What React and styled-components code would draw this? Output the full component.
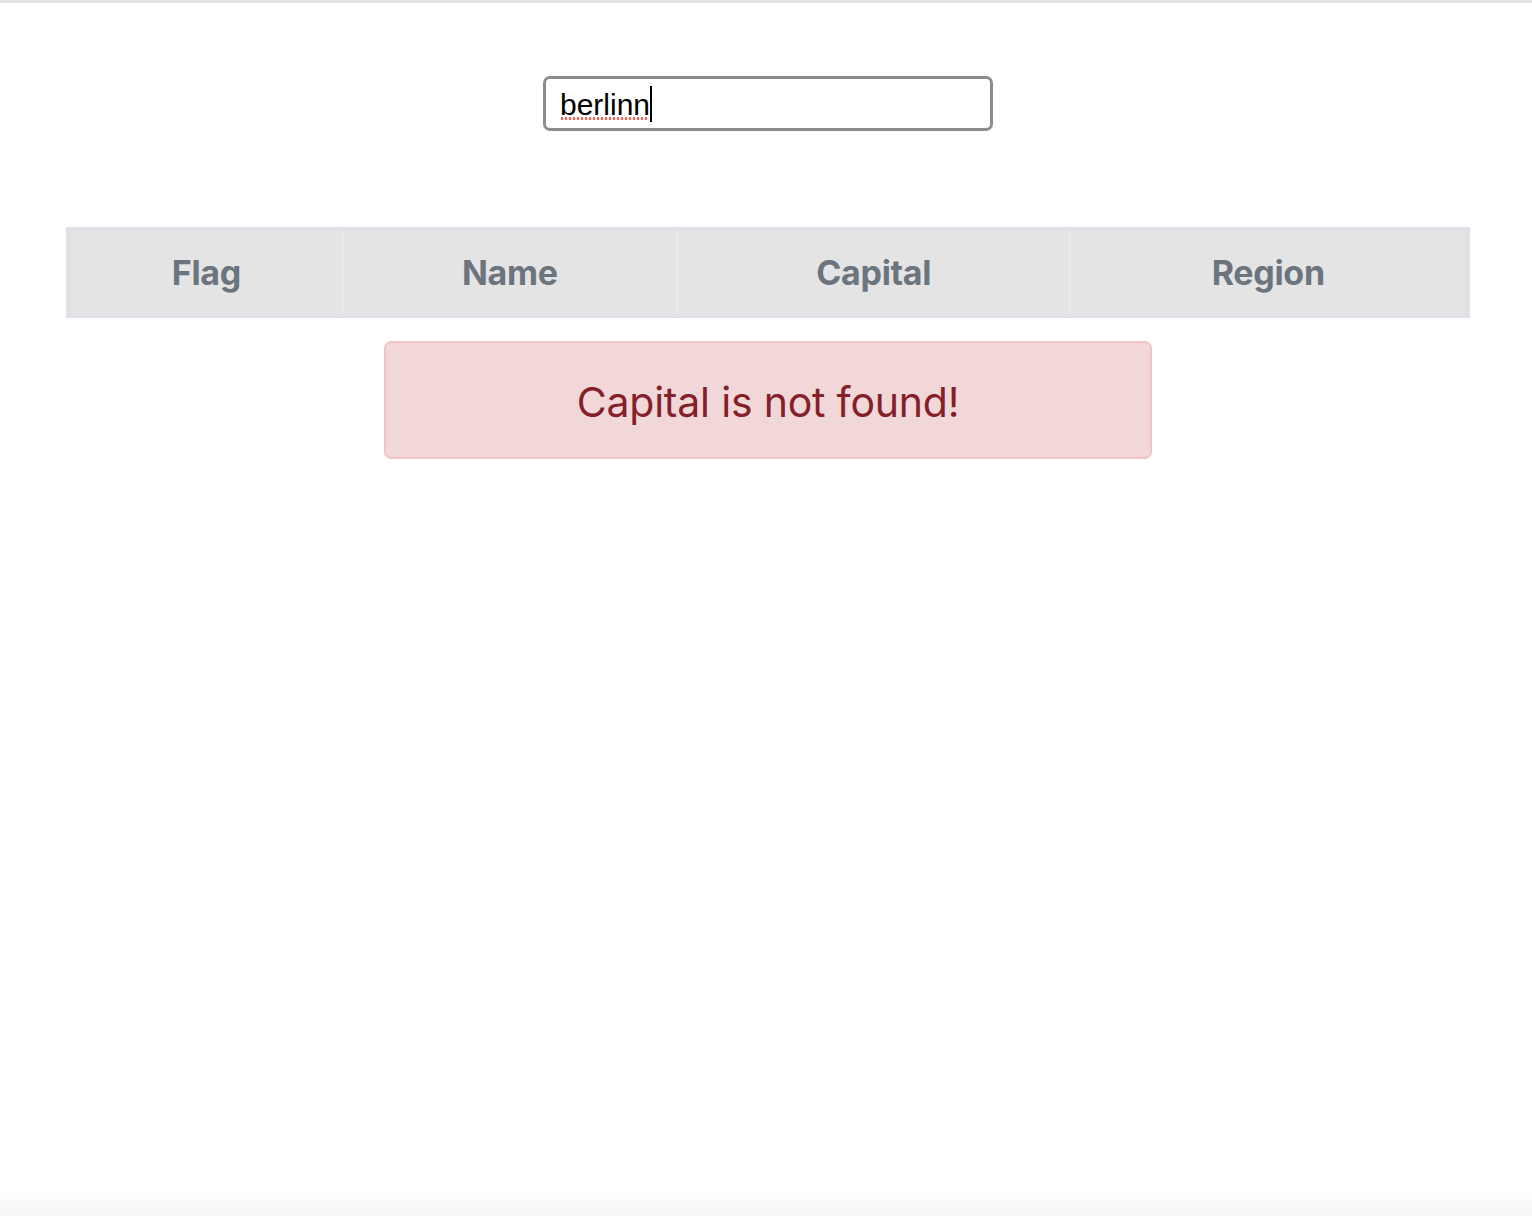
import styled, { createGlobalStyle } from "styled-components";

const GlobalStyle = createGlobalStyle`
  html, body {
    margin: 0;
    padding: 0;
    background: #ffffff;
  }
  body {
    font-family: "Inter", "Liberation Sans", sans-serif;
  }
`;

const Page = styled.div`
  min-height: 1216px;
  box-sizing: border-box;
  border-top: 3px solid #e2e2e2;
  padding: 0 62px 0 66px;
  display: flex;
  flex-direction: column;
  align-items: center;
  background: linear-gradient(to bottom, #ffffff 1185px, #f6f6f6 1213px, #e6e6e6 1213px);
`;

const SearchWrap = styled.div`
  position: relative;
  margin-top: 73px;
`;

const SearchInput = styled.input`
  display: block;
  width: 450px;
  height: 55px;
  box-sizing: border-box;
  border: 3px solid #8c8c8c;
  border-radius: 7px;
  padding: 2px 14px 0;
  font-family: "Liberation Sans", Arial, sans-serif;
  font-size: 30px;
  color: #000000;
  caret-color: #000000;
  outline: none;
`;

/* spell-check squiggle drawn over the typed word */
const Squiggle = styled.span`
  position: absolute;
  left: 17px;
  top: 41px;
  width: 89px;
  height: 3px;
  background-image: radial-gradient(circle, #ee6a5f 1.3px, transparent 1.6px);
  background-size: 4px 3px;
  pointer-events: none;
`;

/* text caret after the typed word */
const Caret = styled.span`
  position: absolute;
  left: 107px;
  top: 10px;
  width: 1.5px;
  height: 36px;
  background: #000000;
  pointer-events: none;
`;

const Table = styled.table`
  margin-top: 96px;
  width: 1404px;
  border-collapse: collapse;
  border: 5px solid #dee2e6;
  border-top-width: 4px;
  border-bottom-width: 4px;
`;

const HeadCell = styled.th`
  width: ${(p) => p.w}px;
  height: 83px;
  padding: 0;
  background: #e4e4e4;
  color: #6c757d;
  font-family: "Inter", "Liberation Sans", sans-serif;
  font-weight: 700;
  font-size: 34px;
  letter-spacing: -0.3px;
  text-align: center;
  border-left: 2px solid #e9eaec;
  &:first-child {
    border-left: none;
  }
`;

const Alert = styled.div`
  margin-top: 23px;
  width: 768px;
  height: 118px;
  box-sizing: border-box;
  display: flex;
  align-items: center;
  justify-content: center;
  background: #f2d7d9;
  border: 2px solid #f0c5c9;
  border-radius: 7px;
  color: #842029;
  font-family: "Inter", "Liberation Sans", sans-serif;
  font-size: 41px;
  letter-spacing: -0.2px;
  padding-top: 3px;
`;

const columns = [
  { label: "Flag", w: 274 },
  { label: "Name", w: 336 },
  { label: "Capital", w: 396 },
  { label: "Region", w: 398 },
];

const App = () => {
  return (
    <>
      <GlobalStyle />
      <Page>
        <SearchWrap>
          <SearchInput type="text" defaultValue="berlinn" spellCheck={false} />
          <Squiggle />
          <Caret />
        </SearchWrap>
        <Table>
          <thead>
            <tr>
              {columns.map((c) => (
                <HeadCell key={c.label} w={c.w}>{c.label}</HeadCell>
              ))}
            </tr>
          </thead>
        </Table>
        <Alert>Capital is not found!</Alert>
      </Page>
    </>
  );
};

export default App;
